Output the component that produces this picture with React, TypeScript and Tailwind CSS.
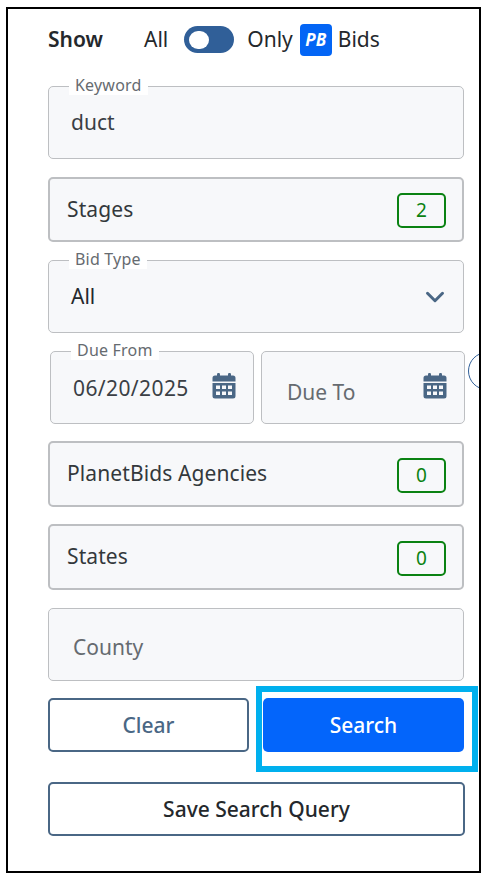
import { ChevronDown } from 'lucide-react';
import type { ReactNode } from 'react';

const FONT = '[font-family:"Noto_Sans","Open_Sans",sans-serif]';

function CalendarIcon() {
  return (
    <svg width="24" height="26" viewBox="0 0 24 26" fill="#4a6785">
      <rect x="5" y="0" width="3" height="5" rx="1.2" />
      <rect x="16" y="0" width="3" height="5" rx="1.2" />
      <path d="M3 2.5h18a2.5 2.5 0 0 1 2.5 2.5v3.5H.5V5A2.5 2.5 0 0 1 3 2.5z" />
      <path
        fillRule="evenodd"
        d="M.5 10h23v13a2.5 2.5 0 0 1-2.5 2.5H3A2.5 2.5 0 0 1 .5 23zM4 12.5v3.5h4v-3.500zM10 12.500v3.500h4v-3.500zM16 12.500v3.500h4v-3.500zM4 18.500v3.500h4v-3.500zM10 18.500v3.500h4v-3.500zM16 18.500v3.500h4v-3.500z"
      />
    </svg>
  );
}

function Field({ label, className, children }: { label?: string; className: string; children: ReactNode }) {
  return (
    <div className={`relative h-[73px] rounded-[5px] border border-[#bdbfc2] bg-[#f7f8fa] ${className}`}>
      {label && (
        <span className="absolute left-[20px] top-[-12px] bg-white px-[6px] text-[16px] leading-[20px] tracking-[0.2px] text-[#666b70]">
          {label}
        </span>
      )}
      {children}
    </div>
  );
}

function CountRow({ label, count, height }: { label: string; count: number; height: string }) {
  return (
    <div className={`flex items-center justify-between rounded-[5px] border-2 border-[#bdbfc2] bg-[#f7f8fa] pl-[17px] pr-[16px] ${height}`}>
      <span className="text-[21px] tracking-[0.1px] text-[#33383c]">{label}</span>
      <span className="mt-[2px] flex h-[35px] w-[49px] items-center justify-center rounded-[5px] border-2 border-[#0a8212] text-[19px] text-[#0a8212]">
        {count}
      </span>
    </div>
  );
}

export default function App() {
  return (
    <div className={`h-[883px] w-[486px] bg-white pl-[6px] pt-[7px] ${FONT}`}>
      <div className="relative h-[866px] w-[475px] border-2 border-black bg-white pl-[40px] pt-[14px]">
        <div className="flex h-[33px] items-center text-[21px] text-[#24282c]">
          <span className="w-[96px] pt-[1px] font-semibold">Show</span>
          <span className="pt-[1px]">All</span>
          <span className="ml-[16px] flex h-[27px] w-[50px] items-center rounded-full bg-[#305f98] pl-[5px]">
            <span className="h-[18px] w-[20px] rounded-full bg-white" />
          </span>
          <span className="ml-[13px]">Only</span>
          <span className="ml-[7px] flex h-[32px] w-[32px] items-center justify-center rounded-[4px] bg-[#0365f5] text-[17px] font-bold italic text-white">
            PB
          </span>
          <span className="ml-[6px]">Bids</span>
        </div>

        <Field label="Keyword" className="mt-[30px] w-[416px]">
          <span className="absolute left-[22px] top-[19px] text-[21px] leading-[32px] text-[#3a3f45]">duct</span>
        </Field>

        <div className="mt-[18px] w-[416px]">
          <CountRow label="Stages" count={2} height="h-[65px]" />
        </div>

        <Field label="Bid Type" className="mt-[18px] w-[416px]">
          <span className="absolute left-[22px] top-[19px] text-[21px] leading-[32px] text-[#24282c]">All</span>
          <ChevronDown className="absolute right-[13px] top-[21px] text-[#4a6785]" size={30} strokeWidth={2.4} />
        </Field>

        <div className="mt-[18px] flex w-[417px] gap-[7px] pl-[2px]">
          <Field label="Due From" className="w-[204px]">
            <span className="absolute left-[22px] top-[20px] text-[21px] leading-[32px] tracking-[0.4px] text-[#3a3f45]">06/20/2025</span>
            <span className="absolute right-[17px] top-[21px]"><CalendarIcon /></span>
          </Field>
          <Field className="w-[204px]">
            <span className="absolute left-[25px] top-[25px] text-[21px] leading-[30px] text-[#666b70]">Due To</span>
            <span className="absolute right-[17px] top-[21px]"><CalendarIcon /></span>
          </Field>
        </div>

        <div className="mt-[17px] w-[416px]">
          <CountRow label="PlanetBids Agencies" count={0} height="h-[66px]" />
        </div>
        <div className="mt-[17px] w-[416px]">
          <CountRow label="States" count={0} height="h-[66px]" />
        </div>

        <Field className="mt-[18px] w-[416px]">
          <span className="absolute left-[24px] top-[22px] text-[21px] leading-[32px] text-[#666b70]">County</span>
        </Field>

        <div className="mt-[17px] flex w-[416px] gap-[14px]">
          <button className="h-[54px] w-[201px] rounded-[5px] border-2 border-[#4a6785] bg-white pt-[2px] text-[21px] font-medium text-[#4a6785]">
            Clear
          </button>
          <button className="h-[54px] w-[201px] rounded-[5px] bg-[#0365fb] pt-[2px] text-[21px] font-medium text-white">
            Search
          </button>
        </div>

        <button className="mt-[30px] h-[54px] w-[417px] rounded-[5px] border-2 border-[#4a6785] bg-white pt-[2px] text-[21px] font-medium text-[#24282c]">
          Save Search Query
        </button>

        {/* annotation box around the search button */}
        <div className="absolute left-[248px] top-[677px] h-[86px] w-[222px] border-[6px] border-[#00b0ee]" />

        {/* clipped circle peeking in from the right edge */}
        <div className="absolute right-0 top-[343px] h-[38px] w-[11px] overflow-hidden">
          <div className="h-[38px] w-[38px] rounded-full border-[1.5px] border-[#305f98] bg-white" />
        </div>
      </div>
    </div>
  );
}
